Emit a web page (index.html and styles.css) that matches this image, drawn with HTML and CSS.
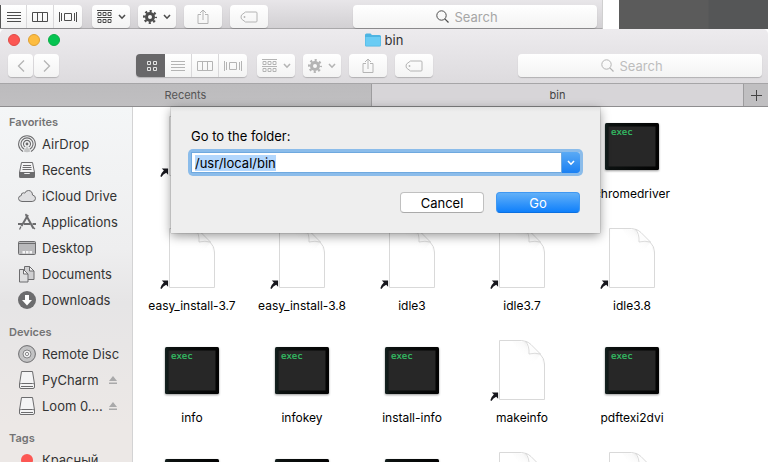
FILE: index.html
```
<!DOCTYPE html>
<html lang="en">
<head>
    <meta charset="UTF-8">
    <title>bin</title>
    <meta name="viewport" content="width=device-width, initial-scale=1">
    <link rel="stylesheet" href="styles.css">
</head>
<body>
    <!-- icon sprite -->
    <svg class="sprite" aria-hidden="true">
        <symbol id="i-grid" viewBox="0 0 12 12">
            <path fill="none" stroke="currentColor" d="M1.5 1.5h3v3h-3zM7.500 1.5h3v3h-3zM1.500 7.500h3v3h-3zM7.500 7.500h3v3h-3z"/>
        </symbol>
        <symbol id="i-list" viewBox="0 0 14 12">
            <path fill="none" stroke="currentColor" d="M0 1.5h14M0 4.500h14M0 7.500h14M0 10.500h14"/>
        </symbol>
        <symbol id="i-columns" viewBox="0 0 16 12">
            <path fill="none" stroke="currentColor" d="M.5 1.500h15v9h-15zM5.500 1.500v9M10.500 1.500v9"/>
        </symbol>
        <symbol id="i-flow" viewBox="0 0 18 12">
            <path fill="none" stroke="currentColor" d="M.5 1v10M2.500 2v8M5.500 2.500h7v7h-7zM15.500 2v8M17.500 1v10"/>
        </symbol>
        <symbol id="i-group" viewBox="0 0 15 14">
            <path fill="none" stroke="currentColor" d="M0 .5h15M0 7.500h15M1 2.500h3v3h-3zM6 2.500h3v3h-3zM11 2.500h3v3h-3zM1 9.500h3v3h-3zM6 9.500h3v3h-3zM11 9.500h3v3h-3z"/>
        </symbol>
        <symbol id="i-gear" viewBox="0 0 14 14">
            <circle cx="7" cy="7" r="3.500" fill="none" stroke="currentColor" stroke-width="3"/>
            <circle cx="7" cy="7" r="5.800" fill="none" stroke="currentColor" stroke-width="2.400" stroke-dasharray="2.100 2.455" stroke-dashoffset="1.050"/>
        </symbol>
        <symbol id="i-down" viewBox="0 0 8 6">
            <path fill="none" stroke="currentColor" stroke-width="1.600" d="M1 1l3 3.200L7 1"/>
        </symbol>
        <symbol id="i-share" viewBox="0 0 12 16">
            <path fill="none" stroke="currentColor" d="M4 5.500H1v9h10v-9H8M6 11V1.500M3 4l3-3 3 3"/>
        </symbol>
        <symbol id="i-tag" viewBox="0 0 18 12">
            <path fill="none" stroke="currentColor" d="M5.500 1h10.500q1 0 1 1v8q0 1-1 1H5.500L1.500 8q-1-2 0-4z"/>
            <circle cx="4.500" cy="6" r=".9" fill="currentColor"/>
        </symbol>
        <symbol id="i-search" viewBox="0 0 13 13">
            <circle cx="5.500" cy="5.500" r="4.700" fill="none" stroke="currentColor"/>
            <path stroke="currentColor" stroke-width="1.200" d="M8.800 8.800l3.700 3.700"/>
        </symbol>
        <symbol id="i-back" viewBox="0 0 8 14">
            <path fill="none" stroke="currentColor" stroke-width="1.300" d="M7 1.500L1.500 7 7 12.500"/>
        </symbol>
        <symbol id="i-forward" viewBox="0 0 8 14">
            <path fill="none" stroke="currentColor" stroke-width="1.300" d="M1 1.500L6.500 7 1 12.500"/>
        </symbol>
        <symbol id="i-eject" viewBox="0 0 8 8">
            <path fill="currentColor" d="M4 0l4 5H0zM0 6.500h8V8H0z"/>
        </symbol>
        <symbol id="i-drive" viewBox="0 0 18 18">
            <path fill="#f4f4f5" stroke="currentColor" d="M3.500.5h11l2 12.500v3q0 1.500-1.500 1.500H3q-1.500 0-1.500-1.500v-3z"/>
            <path fill="none" stroke="currentColor" d="M1.500 13.500q.5-1 2-1h11q1.500 0 2 1M3 15.500h12"/>
        </symbol>
        <symbol id="f-doc" viewBox="0 0 64 64">
            <path class="paper" d="M9.500 3.500h22q5 0 9 4l9.500 9.500q4.500 4.500 4.500 10v35.500h-45z"/>
            <path fill="url(#curl)" d="M33 4l6 13 12 1 3 14V26q-1-5-4-8L41 8q-4-4-8-4z"/>
            <path fill="url(#curl)" d="M36 5l3 12h12L40 30 22 4z" opacity=".5"/>
            <path fill="#fdfdfd" stroke="#d3d3d3" stroke-width=".8" d="M35.500 4.500q4 4 3.500 12.500 6-1.500 11.500 0L41 7.500q-2.500-2.500-5.500-3z"/>
        </symbol>
        <symbol id="f-alias" viewBox="0 0 10 10">
            <path fill="#16161c" d="M2 .5h7v7L6.900 5.200Q3.500 6.800 1.600 10L.4 9.200q1-4 3.900-6.400z"/>
        </symbol>
        <symbol id="f-exec" viewBox="0 0 64 64">
            <rect class="bezel" x="5" y="10" width="54" height="47" rx="1.500"/>
            <rect x="8.500" y="13.500" width="47" height="40" fill="#272727"/>
            <text class="exec" x="11" y="22">exec</text>
        </symbol>
        <defs>
            <linearGradient id="curl" x1="1" y1="0" x2=".2" y2="1">
                <stop offset="0" stop-color="#ccc"/>
                <stop offset=".7" stop-color="#fff" stop-opacity="0"/>
            </linearGradient>
            <linearGradient id="bezel">
                <stop offset="0" stop-color="#142220"/>
                <stop offset=".1" stop-color="#0c1110"/>
                <stop offset="1" stop-color="#030303"/>
            </linearGradient>
        </defs>
    </svg>

    <!-- window behind -->
    <div class="behind">
        <div class="back-window">
            <div class="toolbar">
                <div class="segments cut">
                    <button type="button" aria-label="List"><svg width="14" height="12"><use href="#i-list"/></svg></button>
                    <button type="button" aria-label="Columns"><svg width="16" height="12"><use href="#i-columns"/></svg></button>
                    <button type="button" aria-label="Flow"><svg width="18" height="12"><use href="#i-flow"/></svg></button>
                </div>
                <div class="actions">
                    <button type="button" class="tool" aria-label="Group"><svg width="15" height="14"><use href="#i-group"/></svg><svg width="8" height="6"><use href="#i-down"/></svg></button>
                    <button type="button" class="tool" aria-label="Action"><svg width="14" height="14"><use href="#i-gear"/></svg><svg width="8" height="6"><use href="#i-down"/></svg></button>
                    <button type="button" class="tool off" aria-label="Share"><svg width="12" height="16"><use href="#i-share"/></svg></button>
                    <button type="button" class="tool off" aria-label="Tags"><svg width="18" height="12"><use href="#i-tag"/></svg></button>
                </div>
                <label class="search"><svg width="13" height="13"><use href="#i-search"/></svg><input type="text" placeholder="Search" aria-label="Search"></label>
            </div>
        </div>
        <div class="desk"></div>
    </div>

    <div class="window">
        <header class="titlebar">
            <div class="lights">
                <button type="button" class="light close" aria-label="Close"></button>
                <button type="button" class="light minimize" aria-label="Minimize"></button>
                <button type="button" class="light maximize" aria-label="Zoom"></button>
            </div>
            <svg width="16" height="14" viewBox="0 0 16 14">
                <path fill="#4db4e2" d="M0 2q0-1.500 1.500-1.500h4L7 2h7.500Q16 2 16 3.500V12q0 1.500-1.500 1.500h-13Q0 13.500 0 12z"/>
                <path fill="#6accf4" d="M.5 4h15v8q0 .8-1 .8h-13q-1 0-1-.8z"/>
            </svg>
            <span class="title">bin</span>
        </header>

        <div class="toolbar main-tools">
            <div class="nav">
                <button type="button" aria-label="Back"><svg width="8" height="14"><use href="#i-back"/></svg></button>
                <button type="button" aria-label="Forward"><svg width="8" height="14"><use href="#i-forward"/></svg></button>
            </div>
            <div class="segments">
                <button type="button" class="on" aria-label="Icons"><svg width="12" height="12"><use href="#i-grid"/></svg></button>
                <button type="button" aria-label="List"><svg width="14" height="12"><use href="#i-list"/></svg></button>
                <button type="button" aria-label="Columns"><svg width="16" height="12"><use href="#i-columns"/></svg></button>
                <button type="button" aria-label="Flow"><svg width="18" height="12"><use href="#i-flow"/></svg></button>
            </div>
            <div class="actions">
                <button type="button" class="tool" aria-label="Group"><svg width="15" height="14"><use href="#i-group"/></svg><svg width="8" height="6"><use href="#i-down"/></svg></button>
                <button type="button" class="tool" aria-label="Action"><svg width="14" height="14"><use href="#i-gear"/></svg><svg width="8" height="6"><use href="#i-down"/></svg></button>
                <button type="button" class="tool" aria-label="Share"><svg width="12" height="16"><use href="#i-share"/></svg></button>
                <button type="button" class="tool" aria-label="Tags"><svg width="18" height="12"><use href="#i-tag"/></svg></button>
            </div>
            <label class="search"><svg width="13" height="13"><use href="#i-search"/></svg><input type="text" placeholder="Search" aria-label="Search"></label>
        </div>

        <div class="tabs">
            <button type="button" class="tab">Recents</button>
            <button type="button" class="tab current">bin</button>
            <button type="button" class="add" aria-label="New tab"><svg width="11" height="11" viewBox="0 0 11 11"><path stroke="#444" d="M5.500 0v11M0 5.500h11"/></svg></button>
        </div>

        <div class="content">
            <nav class="sidebar">
                <h2>Favorites</h2>
                <a href="#"><svg width="18" height="18" viewBox="0 0 18 18"><g fill="none" stroke="currentColor" stroke-width="1.100"><path d="M5 16.500a8.400 8.400 0 1 1 8 0M6.300 14.200a6 6 0 1 1 5.400 0M7.200 11.900a3.500 3.500 0 1 1 3.600 0"/></g><circle cx="9" cy="9" r="1.400" fill="currentColor"/><path fill="currentColor" d="M9 11l3.500 5.500q-3.500 1.500-7 0z" opacity=".35"/></svg><span>AirDrop</span></a>
                <a href="#"><svg width="18" height="18" viewBox="0 0 18 18"><path fill="#f4f4f5" stroke="currentColor" d="M3.500 1.500h11l2 10H1.500z"/><path stroke="currentColor" d="M5 4.500h8M4.500 6.500h9M4.500 8.500h9"/><path fill="currentColor" d="M1 11h4.500l1 2h5l1-2H17v4.500q0 1.500-1.500 1.500h-13Q1 17 1 15.500z"/></svg><span>Recents</span></a>
                <a href="#"><svg width="18" height="18" viewBox="0 0 18 18"><path fill="#dfdfe1" stroke="currentColor" d="M4 14.500Q.5 14.300.5 11.500q0-2.500 2.800-3-.3-2.500 2.200-2.700.8 0 1.300.4Q7.600 3.500 10.500 3.500q3.800.2 4 4.500 3 .7 3 3.300 0 3-3.300 3.200z"/></svg><span>iCloud Drive</span></a>
                <a href="#"><svg width="18" height="18" viewBox="0 0 18 18"><path fill="none" stroke="currentColor" stroke-width="2" d="M10 2L3.500 13M8 2l7.500 13.500"/><path stroke="currentColor" stroke-width="1.800" d="M0 11h4M6 11h6M14.500 11H18"/><path stroke="currentColor" stroke-width="1.300" d="M3 13.500L1.500 16.500M14 13.500l3 2.500M7.500 1l1.500 2"/></svg><span>Applications</span></a>
                <a href="#"><svg width="18" height="18" viewBox="0 0 18 18"><rect x=".5" y="2.500" width="17" height="13" rx="1" fill="#b9b9bb" stroke="currentColor"/><path stroke="currentColor" d="M1 4.500h16"/><path fill="#f4f4f5" d="M4.500 12h2.500v2.500H4.500zM8 12h2.500v2.500H8zM11.500 12H14v2.500h-2.500z"/></svg><span>Desktop</span></a>
                <a href="#"><svg width="18" height="18" viewBox="0 0 18 18"><path fill="#cfcfd1" stroke="currentColor" d="M6.500 1.500h5l4.500 4.500v8.500H6.500z"/><path fill="#f4f4f5" stroke="currentColor" d="M11.500 1.500V6H16z"/><path fill="#dededf" stroke="currentColor" d="M1.500 4.500h4L10 9v8H1.500z"/><path fill="#f4f4f5" stroke="currentColor" d="M5.500 4.500V9H10z"/></svg><span>Documents</span></a>
                <a href="#"><svg width="18" height="18" viewBox="0 0 18 18"><circle cx="9" cy="9" r="9" fill="currentColor"/><path fill="#fff" d="M7 4h4v5h3l-5 5.500L4 9h3z"/></svg><span>Downloads</span></a>

                <h2>Devices</h2>
                <a href="#"><svg width="18" height="18" viewBox="0 0 18 18"><circle cx="9" cy="9" r="8.400" fill="#c3c3c4" stroke="currentColor"/><circle cx="9" cy="9" r="4" fill="#efefef" stroke="currentColor" stroke-width=".8"/><circle cx="9" cy="9" r="1.600" fill="#fff" stroke="currentColor" stroke-width=".8"/></svg><span>Remote Disc</span></a>
                <a href="#"><svg width="18" height="18"><use href="#i-drive"/></svg><span>PyCharm</span><svg class="eject" width="8" height="8"><use href="#i-eject"/></svg></a>
                <a href="#"><svg width="18" height="18"><use href="#i-drive"/></svg><span>Loom 0....</span><svg class="eject" width="8" height="8"><use href="#i-eject"/></svg></a>

                <h2>Tags</h2>
                <a href="#"><svg width="18" height="18" viewBox="0 0 18 18"><circle cx="9" cy="9" r="6" fill="#fc5753"/></svg><span>Красный</span></a>
            </nav>

            <main class="files">
                <div class="file"><svg width="64" height="64"><use href="#f-doc"/><use href="#f-alias" y="55" width="9" height="9"/></svg></div>
                <div class="file"></div>
                <div class="file"></div>
                <div class="file"></div>
                <div class="file"><svg width="64" height="64"><use href="#f-exec"/></svg><span>chromedriver</span></div>

                <div class="file"><svg width="64" height="64"><use href="#f-doc"/><use href="#f-alias" y="55" width="9" height="9"/></svg><span>easy_install-3.7</span></div>
                <div class="file"><svg width="64" height="64"><use href="#f-doc"/><use href="#f-alias" y="55" width="9" height="9"/></svg><span>easy_install-3.8</span></div>
                <div class="file"><svg width="64" height="64"><use href="#f-doc"/><use href="#f-alias" y="55" width="9" height="9"/></svg><span>idle3</span></div>
                <div class="file"><svg width="64" height="64"><use href="#f-doc"/><use href="#f-alias" y="55" width="9" height="9"/></svg><span>idle3.7</span></div>
                <div class="file"><svg width="64" height="64"><use href="#f-doc"/><use href="#f-alias" y="55" width="9" height="9"/></svg><span>idle3.8</span></div>

                <div class="file"><svg width="64" height="64"><use href="#f-exec"/></svg><span>info</span></div>
                <div class="file"><svg width="64" height="64"><use href="#f-exec"/></svg><span>infokey</span></div>
                <div class="file"><svg width="64" height="64"><use href="#f-exec"/></svg><span>install-info</span></div>
                <div class="file"><svg width="64" height="64"><use href="#f-doc"/><use href="#f-alias" y="55" width="9" height="9"/></svg><span>makeinfo</span></div>
                <div class="file"><svg width="64" height="64"><use href="#f-exec"/></svg><span>pdftexi2dvi</span></div>

                <div class="file"><svg width="64" height="64"><use href="#f-exec"/></svg></div>
                <div class="file"><svg width="64" height="64"><use href="#f-exec"/></svg></div>
                <div class="file"><svg width="64" height="64"><use href="#f-exec"/></svg></div>
                <div class="file"><svg width="64" height="64"><use href="#f-doc"/></svg></div>
                <div class="file"><svg width="64" height="64"><use href="#f-doc"/></svg></div>
            </main>

            <form class="sheet" autocomplete="off">
                <label for="path">Go to the folder:</label>
                <div class="combo">
                    <input type="text" id="path" value="/usr/local/bin">
                    <button type="button" aria-label="Recent folders"><svg width="8" height="6"><use href="#i-down"/></svg></button>
                </div>
                <div class="sheet-buttons">
                    <button type="button">Cancel</button>
                    <button type="submit" class="primary">Go</button>
                </div>
            </form>
        </div>
    </div>
    <script>
        // the sheet opens with the path selected
        const path = document.getElementById('path');
        path.focus();
        path.select();
    </script>
</body>
</html>
```
FILE: styles.css
```
* {
    box-sizing: border-box;
}
body {
    margin: 0;
    height: 100vh;
    overflow: hidden;
    display: flex;
    flex-direction: column;
    font-family: Inter, "Noto Sans", sans-serif;
    font-size: 13px;
    color: #333;
    background: #fff;
}
button, input {
    font-family: inherit;
    font-size: inherit;
    color: inherit;
    border: 0;
    padding: 0;
    margin: 0;
}
svg {
    flex: none;
    display: block;
}
.sprite {
    position: absolute;
    width: 0;
    height: 0;
}

/* window behind */
.behind {
    display: flex;
    flex: none;
    height: 29px;
}
.back-window {
    flex: 0 1 603px;
    padding-top: 5px;
    background: linear-gradient(#e8e6e9, #d2d0d3);
    border-bottom: 1px solid #a9a8aa;
    border-right: 1px solid #d0d0d0;
    color: #4c4c4c;
}
.desk {
    flex: 1;
    margin-left: 16px;
    background: linear-gradient(90deg, #5b5b5b 89px, #555657 90px);
}

/* toolbar */
.toolbar {
    display: flex;
    align-items: center;
    padding-right: 5px;
}
.segments {
    display: flex;
    height: 23px;
    margin-right: 10px;
    border-radius: 4px;
    overflow: hidden;
    box-shadow: 0 1px 1px rgba(0,0,0,0.2);
}
.segments button {
    display: flex;
    align-items: center;
    justify-content: center;
    width: 27px;
    background: linear-gradient(#fff, #f3f3f3);
    border-right: 1px solid #d9d8da;
}
.segments button:last-child {
    width: 28px;
    border-right: 0;
}
.segments .on {
    width: 29px;
    padding-left: 2px;
    background: #686769;
    border-right: 0;
    color: #e4e4e4;
}
.cut {
    border-left: 1px solid #555;
    border-radius: 0 4px 4px 0;
}
.cut button:first-child {
    width: 26px;
}
.actions {
    display: flex;
    gap: 8px;
}
.tool {
    display: flex;
    align-items: center;
    justify-content: center;
    gap: 6px;
    width: 38px;
    height: 23px;
    border-radius: 4px;
    background: linear-gradient(#fff, #f3f3f3);
    box-shadow: 0 1px 1px rgba(0,0,0,0.2);
}
.off {
    color: #b4b4b4;
}
.search {
    display: flex;
    align-items: center;
    justify-content: center;
    gap: 6px;
    flex: 0 1 244px;
    height: 23px;
    margin-left: auto;
    border-radius: 4px;
    background: linear-gradient(#fff, #f3f3f3);
    box-shadow: 0 1px 1px rgba(0,0,0,0.2);
}
.search input {
    width: 60px;
    line-height: 18px;
    background: none;
    outline: 0;
}
.search input::placeholder {
    color: #a6a6a6;
    opacity: 1;
}

/* front window */
.window {
    display: flex;
    flex-direction: column;
    flex: 1;
    min-height: 0;
    border-radius: 5px 5px 0 0;
    background: linear-gradient(#edebee, #dddbde 54px);
}
.titlebar {
    display: flex;
    align-items: center;
    justify-content: center;
    gap: 4px;
    flex: none;
    height: 22px;
    position: relative;
}
.lights {
    position: absolute;
    left: 8px;
    display: flex;
    gap: 8px;
}
.light {
    width: 12px;
    height: 12px;
    border-radius: 50%;
}
.close {
    background: #fc5753;
    border: 1px solid #e04b47;
}
.minimize {
    background: #fdbc40;
    border: 1px solid #dfa033;
}
.maximize {
    background: #05c451;
    border: 1px solid #0bae47;
}
.main-tools {
    flex: none;
    height: 32px;
    padding: 3px 6px 6px 8px;
    color: #b4b4b4;
}
.main-tools .search input::placeholder {
    color: #bdbdbd;
}
.nav {
    display: flex;
    gap: 1px;
    margin-right: 77px;
}
.nav button {
    display: flex;
    align-items: center;
    justify-content: center;
    width: 25px;
    height: 23px;
    border-radius: 4px;
    background: linear-gradient(#fff, #f3f3f3);
    box-shadow: 0 1px 1px rgba(0,0,0,0.2);
}

/* tabs */
.tabs {
    display: flex;
    flex: none;
    height: 24px;
    border-top: 1px solid #a6a5a7;
    border-bottom: 1px solid #8e8d8f;
    font-size: 11px;
}
.tab {
    flex: 1;
    background: linear-gradient(#bcbbbd, #c0bfc1);
    border-right: 1px solid #9d9c9e;
    color: #555;
}
.current {
    background: #d7d5d8;
    color: #444;
}
.add {
    display: flex;
    align-items: center;
    justify-content: center;
    width: 24px;
    background: #c0bfc1;
}

.content {
    display: flex;
    flex: 1;
    min-height: 0;
    position: relative;
    background: #fff;
}

/* sidebar */
.sidebar {
    flex: none;
    width: 133px;
    padding: 6px 15px 0 18px;
    overflow: hidden;
    background: linear-gradient(#f4f6f7, #eeeeef 40%, #e6e5e6 55%, #ece8e6 90%);
    border-right: 1px solid #d3d3d4;
}
.sidebar h2 {
    margin: 10px 0 0 -9px;
    font-size: 11px;
    line-height: 18px;
    font-weight: 600;
    color: #737374;
}
.sidebar h2:first-child {
    margin-top: 0;
}
.sidebar a {
    display: flex;
    align-items: center;
    gap: 6px;
    height: 26px;
    color: #6c6c6e;
    text-decoration: none;
    white-space: nowrap;
}
.sidebar span {
    color: #333;
}
.sidebar .eject {
    margin-left: auto;
    color: #a9a9aa;
}

/* files */
.files {
    flex: 1;
    display: grid;
    grid-template-columns: repeat(auto-fill, 110px);
    grid-auto-rows: 89px;
    row-gap: 23px;
    padding: 6px 0 0 4px;
    overflow: hidden;
}
.file {
    display: flex;
    flex-direction: column;
    align-items: center;
    gap: 9px;
    font-size: 12px;
    line-height: 16px;
    color: #000;
}
.paper {
    fill: #fff;
    stroke: #d9d9d9;
}
.bezel {
    fill: url(#bezel);
    filter: drop-shadow(0 1px 1px rgba(0,0,0,0.4));
}
.exec {
    font-family: "DejaVu Sans Mono", monospace;
    font-size: 9px;
    fill: #35c468;
    stroke: #35c468;
    stroke-width: 0.2;
}

/* go to folder sheet */
.sheet {
    position: absolute;
    top: 0;
    left: 50%;
    width: 429px;
    margin-left: -213px;
    padding: 21px 20px 20px;
    background: linear-gradient(#e2e2e2, #eee 5px);
    box-shadow: 0 3px 10px rgba(0,0,0,0.4), 0 0 1px rgba(0,0,0,0.5);
    color: #000;
}
.sheet label {
    display: block;
    line-height: 16px;
}
.combo {
    display: flex;
    height: 21px;
    margin-top: 8px;
    border-radius: 2px;
    box-shadow: 0 0 0 3px #8bbcea;
}
.combo input {
    flex: 1;
    min-width: 0;
    padding-left: 3px;
    border: 1px solid #6fa9df;
    background: #fff;
    outline: 0;
}
.combo input::selection {
    background: #b3d7fd;
    color: #000;
}
.combo button {
    display: flex;
    align-items: center;
    justify-content: center;
    width: 18px;
    border-radius: 0 3px 3px 0;
    background: linear-gradient(#5aaaf5, #1a80f3);
    color: #fff;
}
.sheet-buttons {
    display: flex;
    justify-content: flex-end;
    gap: 12px;
    margin-top: 19px;
}
.sheet-buttons button {
    width: 84px;
    height: 21px;
    border: 1px solid #c0c0c0;
    border-bottom-color: #aaa;
    border-radius: 4px;
    background: #fff;
}
.sheet-buttons .primary {
    border-color: #3f98f2;
    border-bottom-color: #0a6fe0;
    background: linear-gradient(#62b0f8, #0f80fb);
    color: #fff;
}
```
